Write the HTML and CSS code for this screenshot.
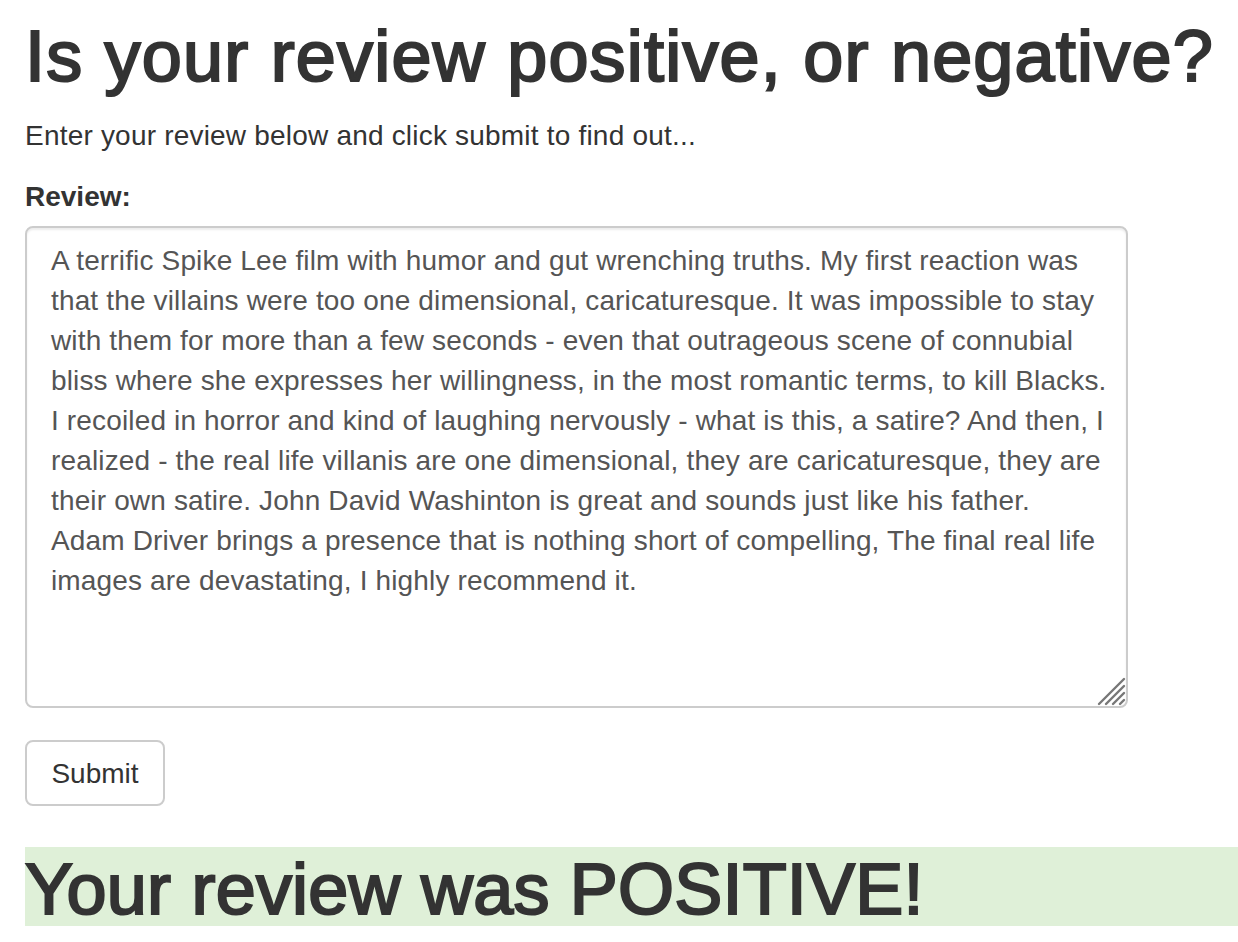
FILE: index.html
```html
<!DOCTYPE html>
<html lang="en">
<head>
<meta charset="utf-8">
<title>Sentiment Analysis</title>
<link rel="stylesheet" href="styles.css">
</head>
<body>
<main class="page">
  <h1 class="title">Is your review positive, or negative?</h1>
  <p class="intro">Enter your review below and click submit to find out...</p>
  <form class="review-form">
    <label class="field-label" for="review">Review:</label>
    <div class="field">
      <textarea id="review" class="review-input" wrap="off">A terrific Spike Lee film with humor and gut wrenching truths. My first reaction was
that the villains were too one dimensional, caricaturesque. It was impossible to stay
with them for more than a few seconds - even that outrageous scene of connubial
bliss where she expresses her willingness, in the most romantic terms, to kill Blacks.
I recoiled in horror and kind of laughing nervously - what is this, a satire? And then, I
realized - the real life villanis are one dimensional, they are caricaturesque, they are
their own satire. John David Washinton is great and sounds just like his father.
Adam Driver brings a presence that is nothing short of compelling, The final real life
images are devastating, I highly recommend it.</textarea>
      <svg class="grip" width="32" height="32" viewBox="0 0 32 32" aria-hidden="true">
        <g stroke="#777" stroke-width="2.4" stroke-linecap="round">
          <line x1="3" y1="28" x2="28" y2="3"/>
          <line x1="10" y1="28" x2="28" y2="10"/>
          <line x1="17" y1="28" x2="28" y2="17"/>
          <line x1="24" y1="28" x2="28" y2="24"/>
        </g>
      </svg>
    </div>
    <button type="button" class="submit-btn">Submit</button>
  </form>
  <h1 class="result">Your review was POSITIVE!</h1>
</main>
</body>
</html>
```

FILE: styles.css
```css
html, body {
  margin: 0;
  padding: 0;
  background: #fff;
}

body {
  font-family: "Liberation Sans", Arial, Helvetica, sans-serif;
  color: #333;
}

.page {
  padding-left: 25px;
  display: flex;
  flex-direction: column;
  align-items: flex-start;
}

.title {
  margin: 17px 0 0;
  font-size: 72px;
  line-height: 79px;
  font-weight: normal;
  letter-spacing: 1.2px;
  -webkit-text-stroke: 2.2px #333;
  white-space: nowrap;
}

.intro {
  margin: 20px 0 0;
  font-size: 28px;
  line-height: 40px;
  letter-spacing: 0.2px;
  color: #333;
}

.review-form {
  display: flex;
  flex-direction: column;
  align-items: flex-start;
  margin: 21px 0 0;
}

.field-label {
  font-size: 28px;
  line-height: 40px;
  font-weight: bold;
  color: #333;
}

.field {
  position: relative;
  margin-top: 9px;
  width: 1103px;
  height: 482px;
}

.review-input {
  display: block;
  box-sizing: border-box;
  width: 100%;
  height: 100%;
  margin: 0;
  padding: 13px 24px 11px;
  border: 2px solid #ccc;
  border-radius: 8px;
  box-shadow: inset 0 2px 2px rgba(0, 0, 0, 0.075);
  font-family: "Liberation Sans", Arial, Helvetica, sans-serif;
  font-size: 28px;
  line-height: 40px;
  letter-spacing: 0.15px;
  color: #555;
  background: #fff;
  resize: none;
  overflow: hidden;
  white-space: pre;
  outline: none;
}

.grip {
  position: absolute;
  right: 0;
  bottom: 0;
}

.submit-btn {
  margin-top: 32px;
  box-sizing: border-box;
  width: 140px;
  height: 66px;
  padding: 2px 0 0;
  border: 2px solid #ccc;
  border-radius: 8px;
  background: #fff;
  font-family: "Liberation Sans", Arial, Helvetica, sans-serif;
  font-size: 28px;
  line-height: 40px;
  color: #333;
}

.result {
  align-self: stretch;
  margin: 41px 0 0;
  padding: 5px 0 0;
  height: 79px;
  box-sizing: border-box;
  font-size: 72px;
  line-height: 74px;
  font-weight: normal;
  letter-spacing: 0.2px;
  -webkit-text-stroke: 2.2px #333;
  background: #dff0d8;
  white-space: nowrap;
}
```
